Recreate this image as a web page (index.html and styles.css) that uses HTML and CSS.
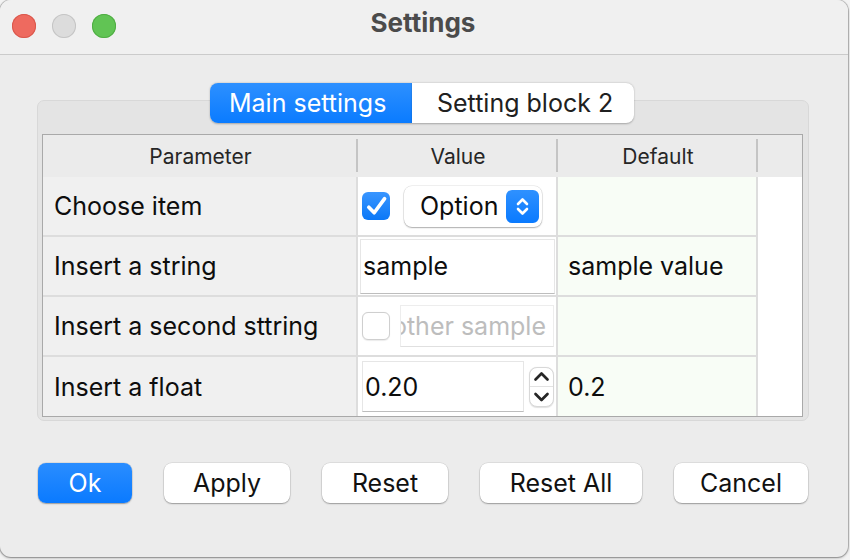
FILE: index.html
```html
<!DOCTYPE html>
<html lang="en">
<head>
<meta charset="utf-8">
<title>Settings</title>
<link rel="stylesheet" href="styles.css">
</head>
<body>
<div class="window">
  <header class="titlebar">
    <div class="lights">
      <span class="light red"></span>
      <span class="light gray"></span>
      <span class="light green"></span>
    </div>
    <div class="title">Settings</div>
    <div class="spacer"></div>
  </header>
  <main class="content">
    <div class="tabs">
      <div class="tab active">Main settings</div>
      <div class="tab second">Setting block 2</div>
    </div>
    <section class="group">
      <div class="table">
        <div class="th">Parameter</div>
        <div class="th">Value</div>
        <div class="th">Default</div>
        <div class="th filler-h"></div>

        <div class="td param">Choose item</div>
        <div class="td value">
          <span class="check on">
            <svg width="28" height="28" viewBox="0 0 28 28"><path d="M6.8 15.2 L12.2 20.8 L22.6 6.6" fill="none" stroke="#fff" stroke-width="3.6" stroke-linecap="round" stroke-linejoin="round"/></svg>
          </span>
          <span class="combo">
            <span class="combo-text">Option</span>
            <span class="combo-btn">
              <svg width="33" height="33" viewBox="0 0 33 33"><path d="M12 14 L16.5 9.5 L21 14 M12 19 L16.5 23.5 L21 19" fill="none" stroke="#fff" stroke-width="2.6" stroke-linecap="round" stroke-linejoin="round"/></svg>
            </span>
          </span>
        </div>
        <div class="td def"></div>
        <div class="filler"></div>

        <div class="td param">Insert a string</div>
        <div class="td value">
          <span class="edit wide">sample</span>
        </div>
        <div class="td def">sample value</div>

        <div class="td param">Insert a second sttring</div>
        <div class="td value">
          <span class="check off"></span>
          <span class="edit disabled"><span class="clip">other sample</span></span>
        </div>
        <div class="td def"></div>

        <div class="td param last">Insert a float</div>
        <div class="td value last">
          <span class="edit spin-edit">0.20</span>
          <span class="spin-btns">
            <svg width="25" height="40" viewBox="0 0 25 40"><path d="M6.5 12.5 L12.5 6.5 L18.5 12.5" fill="none" stroke="#262626" stroke-width="2.7" stroke-linecap="round" stroke-linejoin="round"/><path d="M1 19.5 H24" stroke="#e2e2e2" stroke-width="1"/><path d="M6.5 27 L12.5 33 L18.5 27" fill="none" stroke="#262626" stroke-width="2.7" stroke-linecap="round" stroke-linejoin="round"/></svg>
          </span>
        </div>
        <div class="td def last">0.2</div>
      </div>
    </section>
    <div class="buttons">
      <button class="btn primary w-ok">Ok</button>
      <button class="btn w-apply">Apply</button>
      <button class="btn w-reset">Reset</button>
      <button class="btn w-resetall">Reset All</button>
      <button class="btn w-cancel">Cancel</button>
    </div>
  </main>
</div>
</body>
</html>
```

FILE: styles.css
```css
* { box-sizing: border-box; }
html, body { margin: 0; padding: 0; }
body {
  width: 850px;
  height: 560px;
  overflow: hidden;
  background: #f3f3f3;
  font-family: "Inter", "Liberation Sans", sans-serif;
}
.window {
  width: 848px;
  height: 557px;
  background: #ececec;
  border-radius: 11px;
  overflow: hidden;
  box-shadow: 0 0 0 1px rgba(0,0,0,0.18), 0 1px 3px rgba(0,0,0,0.35);
  display: flex;
  flex-direction: column;
}
.titlebar {
  height: 55px;
  flex: none;
  display: grid;
  grid-template-columns: 1fr auto 1fr;
  align-items: center;
  background: #f0f0f0;
  border-bottom: 1px solid #cbcbcb;
  padding: 0 12px;
}
.lights { display: flex; gap: 16px; margin-top: -2px; }
.light { width: 24px; height: 24px; border-radius: 50%; display: block; }
.red { background: #ee6a5f; box-shadow: inset 0 0 0 1px #d9584d; }
.gray { background: #dcdcdc; box-shadow: inset 0 0 0 1px #c5c5c5; }
.green { background: #61c454; box-shadow: inset 0 0 0 1px #50ad44; }
.title {
  font-weight: 700;
  font-size: 26px;
  color: #4b4b4b;
  margin-top: -10px;
  margin-right: 2px;
}
.content { padding: 28px 37px 0; }
.tabs {
  display: flex;
  justify-content: center;
  padding-right: 4px;
  position: relative;
  z-index: 1;
  height: 40px;
  margin-bottom: -23px;
}
.tab {
  height: 40px;
  display: flex;
  align-items: center;
  font-size: 25px;
  color: #202020;
  background: #fff;
  box-shadow: 0 0.5px 2px rgba(0,0,0,0.28);
}
.tab.active {
  width: 202px;
  padding-left: 19px;
  border-radius: 8px 0 0 8px;
  background: linear-gradient(#2d90ff, #0a7bff);
  color: #fff;
}
.tab.second {
  width: 222px;
  padding-left: 25px;
  border-radius: 0 8px 8px 0;
}
.group {
  width: 772px;
  background: #e4e4e4;
  border: 1px solid #d8d8d8;
  border-radius: 7px;
  padding: 33px 5px 3px 4px;
}
.table {
  display: grid;
  grid-template-columns: 315px 200px 200px 1fr;
  grid-template-rows: 42px 60px 60px 60px 59px;
  border: 1px solid #a9a9a9;
  background: #fff;
}
.th {
  background: #ebebeb;
  font-size: 21px;
  color: #262626;
  display: flex;
  align-items: center;
  justify-content: center;
  position: relative;
}
.th::after {
  content: "";
  position: absolute;
  right: 0;
  top: 4px;
  bottom: 5px;
  width: 2px;
  background: #c4c4c4;
}
.th.filler-h::after { display: none; }
.td {
  border-right: 2px solid #dddddd;
  border-bottom: 2px solid #dddddd;
  display: flex;
  align-items: center;
  font-size: 25px;
  color: #0d0d0d;
  white-space: nowrap;
}
.td.last { border-bottom: none; }
.param { background: #f0f0f0; padding-left: 11px; }
.value { background: #fff; padding-left: 4px; }
.def { background: #f8fdf6; padding-left: 10px; }
.filler { grid-column: 4; grid-row: 2 / span 4; background: #fff; }

.check {
  width: 28px;
  height: 28px;
  border-radius: 6px;
  flex: none;
  display: block;
}
.check svg { display: block; }
.check.on { background: linear-gradient(#3a96ff, #0b78f7); }
.check.off {
  background: #ffffff;
  border: 1px solid #cfcfcf;
  box-shadow: 0 0.5px 1px rgba(0,0,0,0.08);
}
.combo {
  margin-left: 14px;
  width: 138px;
  height: 41px;
  border-radius: 8px;
  background: #fff;
  box-shadow: 0 0 0 0.5px rgba(0,0,0,0.12), 0 1px 1.5px rgba(0,0,0,0.28);
  display: flex;
  align-items: center;
  padding: 0 3px 0 16px;
}
.combo-text { flex: 1; }
.combo-btn {
  width: 33px;
  height: 33px;
  border-radius: 6px;
  background: linear-gradient(#2f91ff, #0a7aff);
}
.combo-btn svg { display: block; }
.edit {
  display: flex;
  align-items: center;
  background: #fff;
  border: 1px solid #e6e6e6;
  border-bottom-color: #bdbdbd;
  color: #0d0d0d;
}
.edit.wide {
  margin-left: -2px;
  width: 195px;
  height: 55px;
  padding-left: 2px;
}
.edit.disabled {
  margin-left: 10px;
  width: 154px;
  height: 42px;
  border-color: #ededed;
  border-bottom-color: #e0e0e0;
  color: #bdbdbd;
  overflow: hidden;
  justify-content: flex-end;
  padding-right: 7px;
}
.clip { white-space: nowrap; flex: none; }
.edit.spin-edit {
  width: 162px;
  height: 51px;
  padding-left: 2px;
}
.spin-btns {
  margin-left: 5px;
  width: 25px;
  height: 40px;
  border-radius: 8px;
  background: #fff;
  border: 1px solid #d8d8d8;
  box-shadow: 0 0.5px 1px rgba(0,0,0,0.12);
  overflow: hidden;
}
.spin-btns svg { display: block; margin: -1px; }

.buttons {
  display: flex;
  gap: 32px;
  margin-top: 42px;
  padding-left: 1px;
}
.btn {
  height: 40px;
  border: none;
  border-radius: 8px;
  background: #fff;
  box-shadow: 0 0 0 0.5px rgba(0,0,0,0.12), 0 1px 1.5px rgba(0,0,0,0.3);
  font-family: inherit;
  font-size: 25px;
  color: #111;
  padding: 0;
  display: flex;
  align-items: center;
  justify-content: center;
}
.btn.primary { background: linear-gradient(#2a8dff, #0a7aff); color: #fff; }
.w-ok { width: 94px; }
.w-apply { width: 126px; }
.w-reset { width: 126px; }
.w-resetall { width: 162px; }
.w-cancel { width: 134px; }
```
